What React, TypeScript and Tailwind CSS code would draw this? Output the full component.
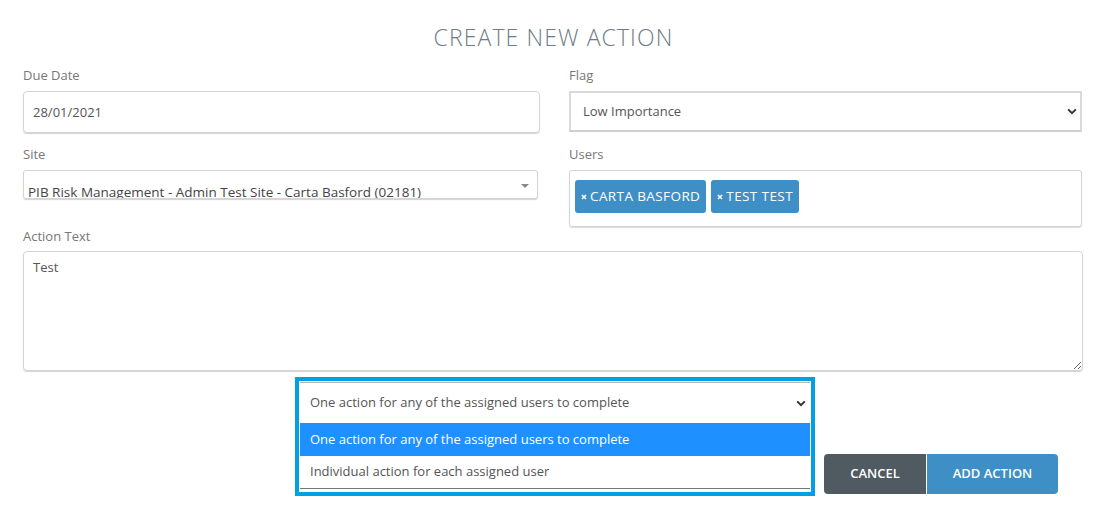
import React from 'react';

const font = { fontFamily: '"Open Sans", "Liberation Sans", sans-serif' };

const Chevron = ({ className = '' }: { className?: string }) => (
  <svg width="10" height="7" viewBox="0 0 10 7" className={className}>
    <path d="M1.2 1.4 5 5.2 8.8 1.4" fill="none" stroke="#333" strokeWidth="2" />
  </svg>
);

const Tag = ({ label }: { label: string }) => (
  <span className="flex h-[33px] items-center gap-[3px] rounded-[3px] bg-[#3d8fc6] px-[6px] text-[13.5px] tracking-[0.4px] text-white">
    <svg width="6" height="6" viewBox="0 0 6 6">
      <path d="M1 1 5 5M5 1 1 5" stroke="#fff" strokeWidth="1.6" />
    </svg>
    {label}
  </span>
);

const Label = ({ children }: { children: React.ReactNode }) => (
  <div className="h-[18px] text-[13px] leading-[18px] text-[#777]">{children}</div>
);

export default function App() {
  return (
    <div className="min-h-[521px] w-[1107px] bg-white pt-[22px]" style={font}>
      <h1 className="h-[30px] text-center text-[23px] font-light leading-[30px] tracking-[1.1px] text-[#6e7b88]">
        CREATE NEW ACTION
      </h1>

      <div className="px-[23px] pt-[14px]">
        <div className="grid grid-cols-[517px_513px] gap-x-[29px]">
          {/* Left column */}
          <div>
            <Label>Due Date</Label>
            <input
              readOnly
              defaultValue="28/01/2021"
              className="mt-[7px] h-[42px] w-full rounded-[4px] border border-[#d4d4d4] px-[9px] text-[13px] text-[#555] shadow-[0_1px_1px_rgba(0,0,0,0.18)] outline-none"
              style={font}
            />
            <div className="mt-[12px]">
              <Label>Site</Label>
            </div>
            <div className="relative mt-[7px] flex h-[29px] w-[515px] items-end overflow-hidden rounded-[3px] border border-[#d4d4d4] shadow-[0_1px_1px_rgba(0,0,0,0.18)]">
              <span className="translate-y-[3px] whitespace-nowrap pl-[4px] text-[13.5px] leading-[18px] text-[#444]">
                PIB Risk Management - Admin Test Site - Carta Basford (02181)
              </span>
              <span className="absolute right-[8px] top-[13px] h-0 w-0 border-x-[4px] border-t-[4px] border-x-transparent border-t-[#888]" />
            </div>
          </div>

          {/* Right column */}
          <div>
            <Label>Flag</Label>
            <div className="mt-[7px] flex h-[41px] items-center justify-between border-2 border-[#dadada] border-b-[#cfcfcf] pl-[12px] pr-[3px] text-[13px] text-[#555]">
              <span>Low Importance</span>
              <Chevron />
            </div>
            <div className="mt-[13px]">
              <Label>Users</Label>
            </div>
            <div className="mt-[7px] flex h-[57px] gap-[5px] rounded-[3px] border border-[#d4d4d4] px-[5px] pt-[9px] shadow-[0_1px_1px_rgba(0,0,0,0.15)]">
              <Tag label="CARTA BASFORD" />
              <Tag label="TEST TEST" />
            </div>
          </div>
        </div>

        <Label>Action Text</Label>
        <textarea
          readOnly
          defaultValue="Test"
          className="mt-[6px] block h-[120px] w-[1060px] rounded-[4px] border border-[#d4d4d4] px-[9px] py-[6px] text-[13px] text-[#555] shadow-[0_1px_1px_rgba(0,0,0,0.18)] outline-none"
          style={font}
        />

        <div className="mt-[6px] flex items-end">
          <div className="ml-[272px] w-[520px] border-4 border-[#00a0e3] bg-white p-[1px] text-[13px]">
            <div className="flex h-[41px] items-center justify-between border-t border-[#b9b9b9] pl-[10px] pr-[4px] text-[#555]">
              <span>One action for any of the assigned users to complete</span>
              <Chevron />
            </div>
            <div className="flex h-[33px] items-center bg-[#1e90ff] pl-[10px] text-white">
              One action for any of the assigned users to complete
            </div>
            <div className="flex h-[32px] items-center pl-[10px] text-[#555]">
              Individual action for each assigned user
            </div>
            <div className="mb-[2px] h-px bg-[#767676]" />
          </div>

          <div className="mb-[2px] ml-[9px] flex h-[40px] text-[13px] font-semibold text-white">
            <button className="w-[102px] rounded-l-[4px] bg-[#4f5a61]" style={font}>CANCEL</button>
            <button className="ml-px w-[131px] rounded-r-[4px] bg-[#3d8fc6]" style={font}>ADD ACTION</button>
          </div>
        </div>
      </div>
    </div>
  );
}
